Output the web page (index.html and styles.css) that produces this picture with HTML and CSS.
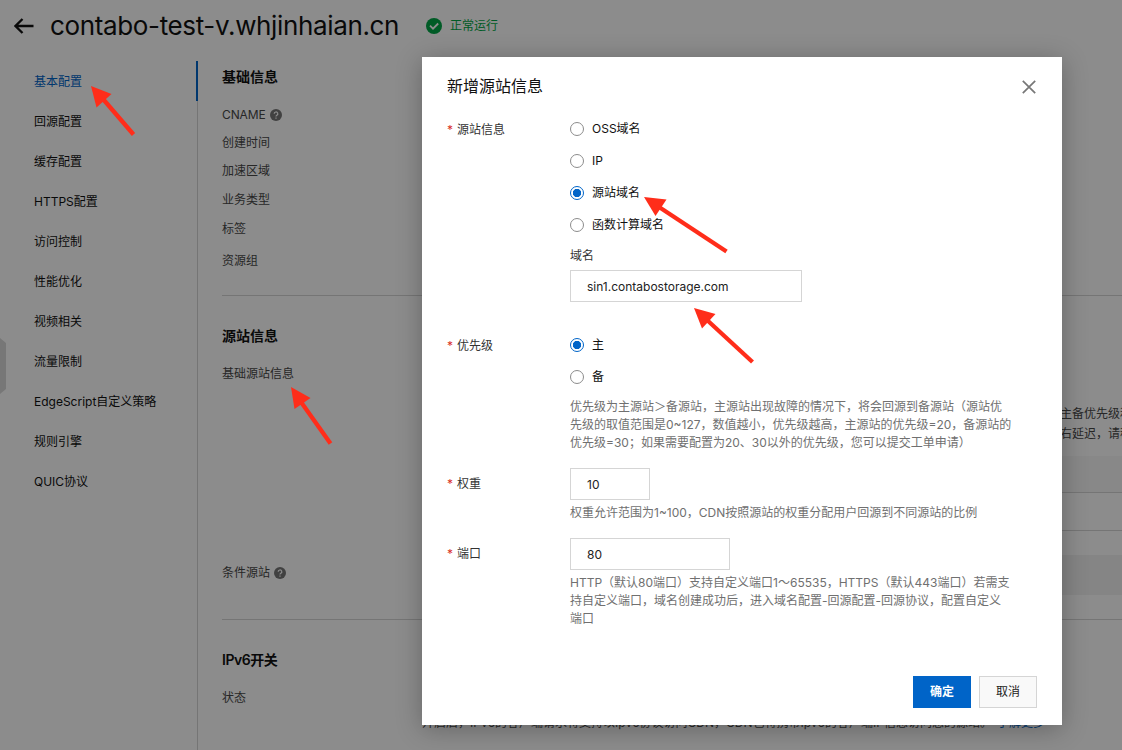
FILE: index.html
```html
<!DOCTYPE html>
<html lang="zh-CN">
<head>
<meta charset="utf-8">
<title>contabo-test-v.whjinhaian.cn</title>
<link rel="stylesheet" href="styles.css">
</head>
<body>
<div class="page">
  <header class="header">
    <svg class="back" width="20" height="16" viewBox="0 0 20 16"><path d="M19.5 8H1.5M8.5 1L1.5 8l7 7" fill="none" stroke="currentColor" stroke-width="2.300"/></svg>
    <h1 class="domain">contabo-test-v.whjinhaian.cn</h1>
    <svg class="ok" width="16" height="16" viewBox="0 0 16 16"><circle cx="8" cy="8" r="8" fill="currentColor"/><path d="M4 7.7l3 3 5.2-5.2" fill="none" stroke="#fff" stroke-width="1.8"/></svg>
    <span class="status">正常运行</span>
  </header>
  <div class="body">
    <nav class="nav">
      <a class="nav-item active">基本配置</a>
      <a class="nav-item">回源配置</a>
      <a class="nav-item">缓存配置</a>
      <a class="nav-item">HTTPS配置</a>
      <a class="nav-item">访问控制</a>
      <a class="nav-item">性能优化</a>
      <a class="nav-item">视频相关</a>
      <a class="nav-item">流量限制</a>
      <a class="nav-item">EdgeScript自定义策略</a>
      <a class="nav-item">规则引擎</a>
      <a class="nav-item">QUIC协议</a>
    </nav>
    <main class="main">
      <section class="section basic">
        <h2 class="title">基础信息</h2>
        <div class="row cname">CNAME <svg class="help" width="12" height="12" viewBox="0 0 12 12"><circle cx="6" cy="6" r="6" fill="currentColor"/><path d="M4.2 4.8a1.8 1.8 0 1 1 2.7 1.5Q6 6.800 6 7.500M6 8.400v1.300" fill="none" stroke="#fff" stroke-width="1.2"/></svg></div>
        <div class="row">创建时间</div>
        <div class="row">加速区域</div>
        <div class="row">业务类型</div>
        <div class="row">标签</div>
        <div class="row group">资源组</div>
      </section>
      <section class="section origin">
        <h2 class="title">源站信息</h2>
        <div class="pair first">
          <div class="row">基础源站信息</div>
          <div class="value">
            <p class="note">主备优先级和<br>右延迟，请稍</p>
            <div class="thead"></div>
            <div class="trow"></div>
          </div>
        </div>
        <div class="pair">
          <div class="row cond">条件源站 <svg class="help" width="12" height="12" viewBox="0 0 12 12"><circle cx="6" cy="6" r="6" fill="currentColor"/><path d="M4.2 4.8a1.8 1.8 0 1 1 2.7 1.5Q6 6.800 6 7.500M6 8.400v1.300" fill="none" stroke="#fff" stroke-width="1.2"/></svg></div>
          <div class="value"><div class="thead second"></div></div>
        </div>
      </section>
      <section class="section ipv6">
        <h2 class="title">IPv6开关</h2>
        <div class="pair">
          <div class="row">状态</div>
          <p class="value tip">开启后，IPv6的客户端请求将支持以Ipv6协议访问CDN，CDN也将携带Ipv6的客户端IP信息访问您的源站。<a class="more">了解更多</a></p>
        </div>
      </section>
    </main>
  </div>
  <div class="handle"></div>
</div>
<div class="mask"></div>

<div class="dialog">
  <div class="dialog-head">
    <span>新增源站信息</span>
    <svg width="14" height="14" viewBox="0 0 14 14"><path d="M.8.8l12.4 12.4M13.2.8L.8 13.2" stroke="#777" stroke-width="1.7"/></svg>
  </div>
  <div class="field source">
    <div class="label"><i>*</i>源站信息</div>
    <div class="control">
      <label class="option"><span class="radio"></span>OSS域名</label>
      <label class="option"><span class="radio"></span>IP</label>
      <label class="option"><span class="radio on"></span>源站域名</label>
      <label class="option"><span class="radio"></span>函数计算域名</label>
      <div class="sub">域名</div>
      <div class="input wide">sin1.contabostorage.com</div>
    </div>
  </div>
  <div class="field priority">
    <div class="label"><i>*</i>优先级</div>
    <div class="control">
      <label class="option"><span class="radio on"></span>主</label>
      <label class="option"><span class="radio"></span>备</label>
      <p class="hint">优先级为主源站＞备源站，主源站出现故障的情况下，将会回源到备源站（源站优<br>先级的取值范围是0~127，数值越小，优先级越高，主源站的优先级=20，备源站的<br>优先级=30；如果需要配置为20、30以外的优先级，您可以提交工单申请）</p>
    </div>
  </div>
  <div class="field weight">
    <div class="label"><i>*</i>权重</div>
    <div class="control">
      <div class="input small">10</div>
      <p class="hint">权重允许范围为1~100，CDN按照源站的权重分配用户回源到不同源站的比例</p>
    </div>
  </div>
  <div class="field port">
    <div class="label"><i>*</i>端口</div>
    <div class="control">
      <div class="input medium">80</div>
      <p class="hint">HTTP（默认80端口）支持自定义端口1～65535，HTTPS（默认443端口）若需支<br>持自定义端口，域名创建成功后，进入域名配置-回源配置-回源协议，配置自定义<br>端口</p>
    </div>
  </div>
  <div class="actions">
    <button class="btn primary">确定</button>
    <button class="btn">取消</button>
  </div>
</div>

<svg class="arrows" width="1122" height="750" viewBox="0 0 1122 750">
  <g fill="#ff2d1a" stroke="#ff2d1a">
    <path stroke="none" d="M91 86L111.500 94L96.500 107.500Z"/><path stroke-width="4.300" d="M103 99L133.500 134.500"/>
    <path stroke="none" d="M291 387L310.500 398L294.500 409Z"/><path stroke-width="4.300" d="M301 402L330.500 443.500"/>
    <path stroke="none" d="M644 197L666.500 199.500L655.500 216Z"/><path stroke-width="4.300" d="M659 207L726.500 251.500"/>
    <path stroke="none" d="M694 308L715.500 314L702 328.500Z"/><path stroke-width="4.300" d="M707 320L752.500 362"/>
  </g>
</svg>
</body>
</html>
```
FILE: styles.css
```css
* { box-sizing: border-box; }
body {
  margin: 0;
  width: 1122px;
  height: 750px;
  overflow: hidden;
  background: #fff;
  color: #333;
  font: 12px/18px Inter, "Noto Sans CJK SC", sans-serif;
}
h1, h2, p { margin: 0; }
.page { position: relative; width: 1122px; height: 750px; overflow: hidden; }
.header { display: flex; align-items: center; height: 61px; padding: 0 0 9px 14px; color: #111; }
.back { margin-right: 16px; }
.domain { width: 349px; font-size: 26px; line-height: 36px; font-weight: 400; letter-spacing: -.36px; white-space: nowrap; }
.ok { margin: 0 8px 0 27px; color: #00a745; }
.status { color: #00a745; }
.body { display: flex; height: 689px; }
.nav { width: 198px; flex: none; border-right: 1px solid #d5d5d5; }
.nav-item { display: flex; align-items: center; width: 198px; height: 40px; padding: 2px 0 0 34px; color: #111; white-space: nowrap; }
.nav-item.active { color: #0064c8; border-right: 2px solid #0064c8; }
.main { flex: 1; min-width: 0; padding-left: 24px; }
.section { border-bottom: 1px solid #d5d5d5; }
.title { height: 20px; font-size: 14px; line-height: 20px; font-weight: 600; color: #111; }
.row { display: flex; align-items: center; gap: 4px; width: 200px; flex: none; height: 18px; color: #484848; margin-bottom: 10.700px; }
.help { color: #777; }
.basic { height: 235px; padding-top: 6px; }
.cname { margin-top: 19px; margin-bottom: 9.500px; letter-spacing: -.1px; }
.group { margin-top: 14.400px; }
.origin { height: 324px; padding-top: 30px; }
.ipv6 { height: 150px; padding-top: 30px; }
.ipv6 .title { letter-spacing: -.45px; }
.pair { display: flex; }
.pair.first { height: 199px; padding-top: 19px; }
.value { flex: 1; min-width: 0; }
.note { margin: 39px 0 12px 638px; line-height: 20px; color: #484848; white-space: nowrap; }
.thead { height: 37px; background: #f7f7f7; border-bottom: 1px solid #d5d5d5; }
.trow { height: 38px; border-bottom: 1px solid #d5d5d5; }
.cond { margin-top: 19px; }
.thead.second { height: 40px; margin-top: 10px; border: 0; background: #f2f2f2; }
.ipv6 .row { margin-top: 19px; }
.tip { padding-top: 44px; color: #484848; white-space: nowrap; }
.more { margin-left: 5px; color: #0064c8; }
.handle { position: absolute; left: 0; top: 338px; width: 6px; height: 56px; background: #d9d9d9; clip-path: polygon(0 0, 100% 5px, 100% 51px, 0 100%); }
.mask { position: absolute; inset: 0; background: rgba(0, 0, 0, .45); }

.dialog {
  position: absolute; left: 422px; top: 57px; width: 640px; height: 668px;
  padding: 18px 25px 17px;
  display: flex; flex-direction: column;
  background: #fff; box-shadow: 0 4px 24px rgba(0, 0, 0, .28);
}
.dialog-head { display: flex; align-items: center; justify-content: space-between; height: 24px; padding-right: 1px; font-size: 16px; color: #111; }
.dialog-head span { padding-bottom: 2px; }
.field { display: flex; }
.label { display: flex; width: 123px; height: 32px; align-items: center; }
.label i { width: 10px; color: #d93026; font-style: normal; }
.source { height: 216px; margin-top: 14px; }
.source .label, .priority .label { padding-top: 2px; }
.priority { height: 139px; }
.weight { height: 70px; }
.port { height: 138px; }
.option { display: flex; align-items: center; gap: 8px; height: 32px; color: #111; }
.radio { width: 14px; height: 14px; border: 1px solid #8c8c8c; border-radius: 50%; background: #fff; }
.radio.on { border-color: #0064c8; background: radial-gradient(circle, #0064c8 3.800px, #fff 4.500px); }
.sub { height: 29px; padding-top: 6px; }
.input { display: flex; align-items: center; height: 32px; padding: 2px 0 0 16px; border: 1px solid #d5d5d5; color: #222; }
.wide { width: 232px; }
.small { width: 80px; }
.medium { width: 160px; }
.hint { padding-top: 4px; color: #707070; white-space: nowrap; }
.priority .hint { padding-top: 5px; }
.actions { display: flex; justify-content: flex-end; gap: 8px; margin-top: auto; }
.btn { width: 58px; height: 32px; padding: 0; border: 1px solid #d5d5d5; background: #f9f9f9; color: #222; font: inherit; }
.primary { border-color: #0064c8; background: #0064c8; color: #fff; font-weight: 600; }
.arrows { position: absolute; left: 0; top: 0; pointer-events: none; }
```
